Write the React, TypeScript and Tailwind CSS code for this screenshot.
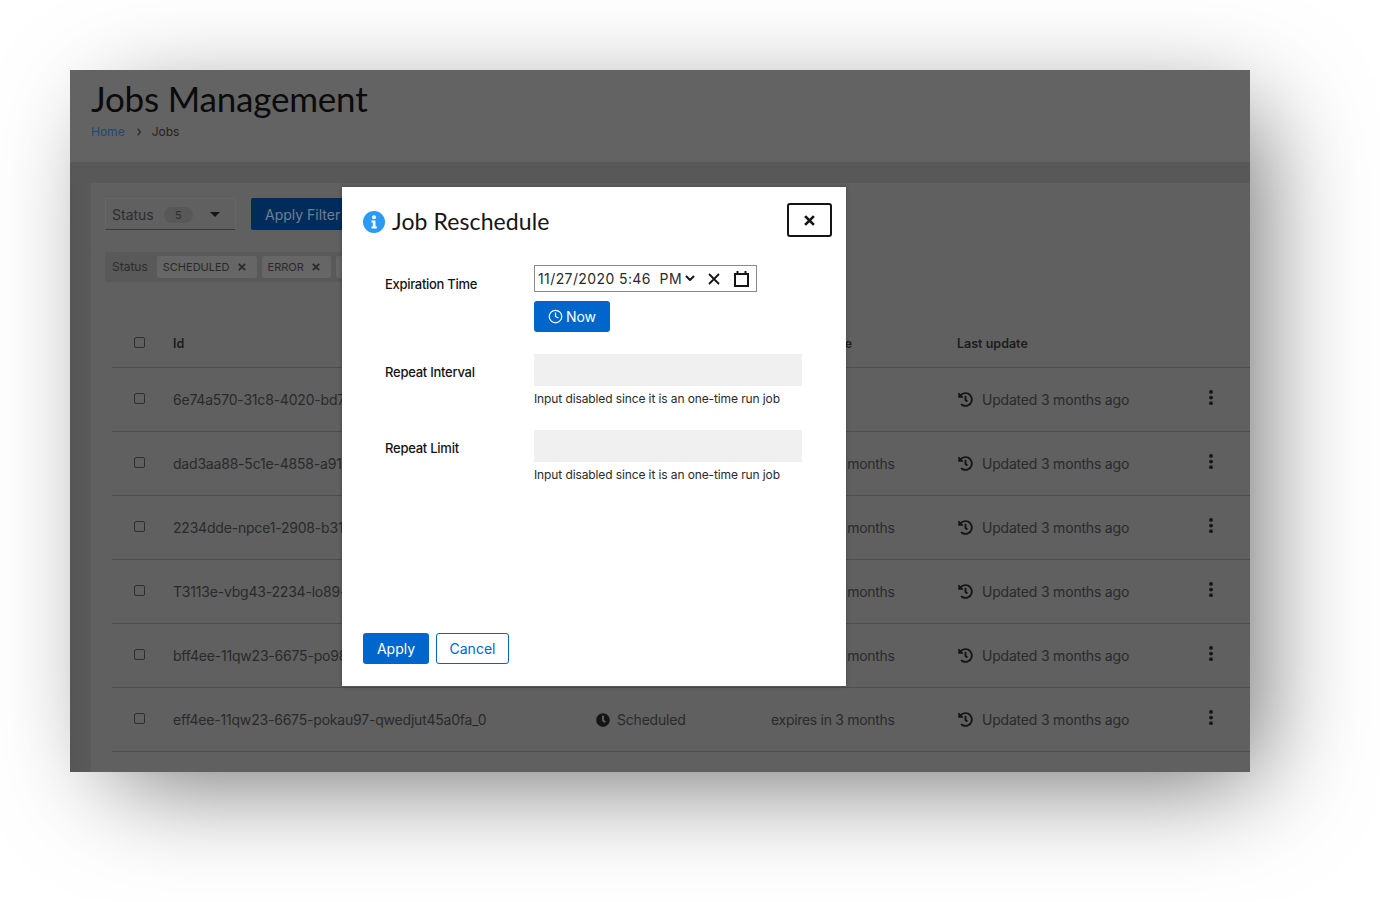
import { Clock } from 'lucide-react';

const rows = [
    { id: '6e74a570-31c8-4020-bd7a-qwedjut45a0fa_0', next: '' },
    { id: 'dad3aa88-5c1e-4858-a91b-qwedjut45a0fa_0', next: 'expires in 3 months' },
    { id: '2234dde-npce1-2908-b31c-qwedjut45a0fa_0', next: 'expires in 3 months' },
    { id: 'T3113e-vbg43-2234-lo89-qwedjut45a0fa_0', next: 'expires in 3 months' },
    { id: 'bff4ee-11qw23-6675-po98-qwedjut45a0fa_0', next: 'expires in 3 months' },
    { id: 'eff4ee-11qw23-6675-pokau97-qwedjut45a0fa_0', next: 'expires in 3 months' }
];

function HistoryIcon() {
    return (
        <svg viewBox="0 0 512 512" className="w-[15px] h-[15px] ml-[1px] fill-[#151515]">
            <path d="M504 255.531c.253 136.64-111.18 248.372-247.82 248.468-59.015.042-113.223-20.53-155.822-54.911-11.077-8.94-11.905-25.541-1.839-35.607l11.267-11.267c8.609-8.609 22.353-9.551 31.891-1.984C173.062 425.135 212.781 440 256 440c101.705 0 184-82.311 184-184 0-101.705-82.311-184-184-184-48.814 0-93.149 18.969-126.068 49.932l50.754 50.754c10.08 10.08 2.941 27.314-11.313 27.314H24c-8.837 0-16-7.163-16-16V38.627c0-14.254 17.234-21.393 27.314-11.314l49.372 49.372C129.209 34.136 189.552 8 256 8c136.81 0 247.747 110.78 248 247.531zm-180.912 78.784l9.823-12.63c8.138-10.463 6.253-25.542-4.21-33.679L288 256.349V152c0-13.255-10.745-24-24-24h-16c-13.255 0-24 10.745-24 24v135.651l65.409 50.874c10.463 8.137 25.541 6.253 33.679-4.21z" />
        </svg>
    );
}

function Kebab() {
    return (
        <svg viewBox="0 0 4 16" className="w-[4px] h-[15px] fill-[#151515]">
            <circle cx="2" cy="2" r="2" />
            <circle cx="2" cy="8" r="2" />
            <circle cx="2" cy="14" r="2" />
        </svg>
    );
}

function ClockSolid() {
    return (
        <svg viewBox="0 0 512 512" className="w-[14px] h-[14px] fill-[#151515]">
            <path d="M256 8C119 8 8 119 8 256s111 248 248 248 248-111 248-248S393 8 256 8zm57.1 350.1L224.9 294c-3.1-2.3-4.9-5.9-4.9-9.700V116c0-6.600 5.400-12 12-12h48c6.600 0 12 5.400 12 12v137.700l63.500 46.200c5.400 3.900 6.500 11.400 2.600 16.800l-28.200 38.800c-3.900 5.300-11.400 6.500-16.800 2.600z" />
        </svg>
    );
}

function Chip({ label }: { label: string }) {
    return (
        <div className="flex items-center gap-[8px] h-[22px] pl-[6px] pr-[11px] bg-[#666666] rounded-[2px] text-[11px] text-[#2a2a2a]">
            {label}
            <svg viewBox="0 0 10 10" className="w-[8px] h-[8px] stroke-[#2a2a2a] stroke-[2.2]">
                <path d="M1 1l8 8M9 1l-8 8" />
            </svg>
        </div>
    );
}

export default function App() {
    return (
        <div className="min-h-[902px] bg-white pt-[70px] pl-[70px] overflow-hidden" style={{ fontFamily: 'Inter, "Noto Sans", sans-serif' }}>
            <div className="relative w-[1180px] h-[702px] shadow-[24px_24px_100px_-18px_rgba(0,0,0,0.6)]">
                <div className="w-full h-full bg-[#606060] overflow-hidden flex flex-col">
                    {/* page header */}
                    <div className="h-[92px] shrink-0 bg-[#636363] pl-[21px] pt-[7px]">
                        <h1 className="text-[35px] leading-[42px] tracking-[-0.2px] text-[#0b0b0b]" style={{ fontFamily: 'Lato, sans-serif' }}>Jobs Management</h1>
                        <div className="flex items-center mt-[4px] text-[12px] leading-[18px]">
                            <span className="text-[#1a4a78]">Home</span>
                            <svg viewBox="0 0 8 12" className="w-[6px] h-[8px] ml-[11px] mr-[10px] fill-none stroke-[#333333] stroke-[2.4]">
                                <path d="M2 1l4 5-4 5" />
                            </svg>
                            <span className="text-[#222222]">Jobs</span>
                        </div>
                    </div>
                    <div className="h-[21px] shrink-0 bg-[#585858]" />
                    <div className="flex-1 flex min-h-0">
                        <div className="w-[21px] shrink-0 bg-gradient-to-r from-[#555555] to-[#5a5a5a]" />
                        <div className="flex-1 min-w-0 pl-[14px]">
                            {/* filter bar */}
                            <div className="flex items-center gap-[15px] pt-[15px]">
                                <div className="flex items-center w-[131px] h-[32px] pl-[6px] pt-[1px] border border-[#666666] border-b-[#3a3a3a] text-[14px] text-[#2c2c2c]">
                                    Status
                                    <span className="ml-[10px] w-[29px] h-[16px] rounded-full bg-[#585858] text-[11px] leading-[16px] text-center">5</span>
                                    <span className="ml-[17px] w-0 h-0 border-x-[5px] border-x-transparent border-t-[5px] border-t-[#151515]" />
                                </div>
                                <div className="h-[32px] w-[110px] rounded-[2px] bg-[#002c5c] text-[14px] leading-[34px] pl-[14px] text-[#6f7f92] whitespace-nowrap">Apply Filter</div>
                            </div>
                            <div className="flex items-center gap-[5px] w-[300px] h-[30px] mt-[22px] pl-[7px] bg-[#595959] rounded-[2px]">
                                <span className="text-[12px] text-[#2c2c2c] mr-[4px]">Status</span>
                                <Chip label="SCHEDULED" />
                                <Chip label="ERROR" />
                                <Chip label="RUNNING" />
                            </div>
                            {/* jobs table */}
                            <div className="mt-[28px] ml-[7px] text-[14px] tracking-[-0.2px] text-[#2a2a2a]">
                                <div className="grid grid-cols-[61px_423px_175px_186px_1fr] items-center h-[58px] pt-[12px] border-b border-[#4e4e4e] font-semibold text-[12.5px] tracking-normal text-[#1c1c1c]">
                                    <span className="pl-[22px]"><span className="block w-[11px] h-[11px] rounded-[2px] border border-[#2d2d2d] -mt-[5px]" /></span>
                                    <span>Id</span>
                                    <span className="whitespace-nowrap">Status</span>
                                    <span className="whitespace-nowrap">Next run time</span>
                                    <span className="whitespace-nowrap">Last update</span>
                                </div>
                                {rows.map((row) => (
                                    <div key={row.id} className="grid grid-cols-[61px_423px_175px_186px_1fr] items-center h-[64px] border-b border-[#4e4e4e]">
                                        <span className="pl-[22px]"><span className="block w-[11px] h-[11px] rounded-[2px] border border-[#2d2d2d] -mt-[3px]" /></span>
                                        <span className="whitespace-nowrap">{row.id}</span>
                                        <span className="flex items-center gap-[7px]"><ClockSolid />Scheduled</span>
                                        <span className="whitespace-nowrap tracking-[-0.3px]">{row.next}</span>
                                        <span className="flex items-center whitespace-nowrap">
                                            <HistoryIcon />
                                            <span className="ml-[9px]">Updated 3 months ago</span>
                                            <span className="ml-[80px] -mt-[5px]"><Kebab /></span>
                                        </span>
                                    </div>
                                ))}
                            </div>
                        </div>
                    </div>
                </div>

                {/* reschedule dialog */}
                <div className="absolute left-[272px] top-[117px] w-[504px] h-[499px] bg-white flex flex-col shadow-[0_0_4px_rgba(0,0,0,0.3)]">
                    <div className="flex items-start pl-[21px] pr-[14px] pt-[16px]">
                        <div className="flex items-center gap-[7px] pt-[5px]">
                            <svg viewBox="0 0 22 22" className="w-[22px] h-[22px]">
                                <circle cx="11" cy="11" r="11" fill="#2b9af3" />
                                <circle cx="11" cy="6.300" r="2" fill="#ffffff" />
                                <path d="M8.500 9.500h4v6h1.300v2h-5.300v-2h1.300v-4h-1.300z" fill="#ffffff" />
                            </svg>
                            <h2 className="text-[23px] leading-[28px] -mt-[1px] tracking-[0.1px] text-[#151515]" style={{ fontFamily: 'Lato, sans-serif' }}>Job Reschedule</h2>
                        </div>
                        <div className="ml-auto w-[45px] h-[34px] rounded-[3px] border-2 border-[#151515] flex items-center justify-center">
                            <svg viewBox="0 0 10 10" className="w-[11px] h-[11px] stroke-[#151515] stroke-[2.4]">
                                <path d="M1 1l8 8M9 1l-8 8" />
                            </svg>
                        </div>
                    </div>
                    <div className="grid grid-cols-[149px_268px] pl-[43px] mt-[28px] text-[#151515]">
                        <div className="text-[13px] font-medium tracking-[-0.3px] leading-[20px] pt-[9px]">Expiration Time</div>
                        <div>
                            <div className="flex items-center w-[223px] h-[27px] border border-[#8a8a8a] pl-[3px] text-[14px] whitespace-nowrap">
                                <span className="tracking-[0.4px] text-[#2a2a2a]">11/27/2020 5:46&nbsp; PM</span>
                                <svg viewBox="0 0 10 6" className="w-[10px] h-[6px] ml-[3px] -mt-[1px] fill-none stroke-[#151515] stroke-[2]">
                                    <path d="M1 1l4 4 4-4" />
                                </svg>
                                <svg viewBox="0 0 12 12" className="w-[12px] h-[12px] ml-[13px] stroke-[#151515] stroke-[1.800]">
                                    <path d="M1 1l10 10M11 1L1 11" />
                                </svg>
                                <svg viewBox="0 0 15 16" className="w-[15px] h-[16px] ml-[14px] fill-none stroke-[#151515] stroke-[2]">
                                    <path d="M1 3h13v12H1zM3.500 0v3M11.500 0v3" />
                                </svg>
                            </div>
                            <div className="flex items-center justify-center gap-[3px] w-[76px] h-[31px] mt-[9px] rounded-[3px] bg-[#0066cc] text-[14px] text-white">
                                <Clock size={15} strokeWidth={2} />
                                Now
                            </div>
                        </div>
                        <div className="text-[13px] font-medium tracking-[-0.25px] leading-[20px] pt-[8px] mt-[22px]">Repeat Interval</div>
                        <div className="mt-[22px]">
                            <div className="h-[32px] bg-[#f0f0f0]" />
                            <p className="mt-[4px] text-[12px] tracking-[-0.11px] leading-[18px] text-[#2a2a2a]">Input disabled since it is an one-time run job</p>
                        </div>
                        <div className="text-[13px] font-medium tracking-[-0.25px] leading-[20px] pt-[8px] mt-[22px]">Repeat Limit</div>
                        <div className="mt-[22px]">
                            <div className="h-[32px] bg-[#f0f0f0]" />
                            <p className="mt-[4px] text-[12px] tracking-[-0.11px] leading-[18px] text-[#2a2a2a]">Input disabled since it is an one-time run job</p>
                        </div>
                    </div>
                    <div className="mt-auto flex gap-[7px] pl-[21px] pb-[22px] text-[14px]">
                        <div className="w-[66px] h-[31px] rounded-[3px] bg-[#0066cc] text-white text-center leading-[31px]">Apply</div>
                        <div className="w-[73px] h-[31px] rounded-[3px] border border-[#0066cc] text-[#0066cc] text-center leading-[29px]">Cancel</div>
                    </div>
                </div>
            </div>
        </div>
    );
}
